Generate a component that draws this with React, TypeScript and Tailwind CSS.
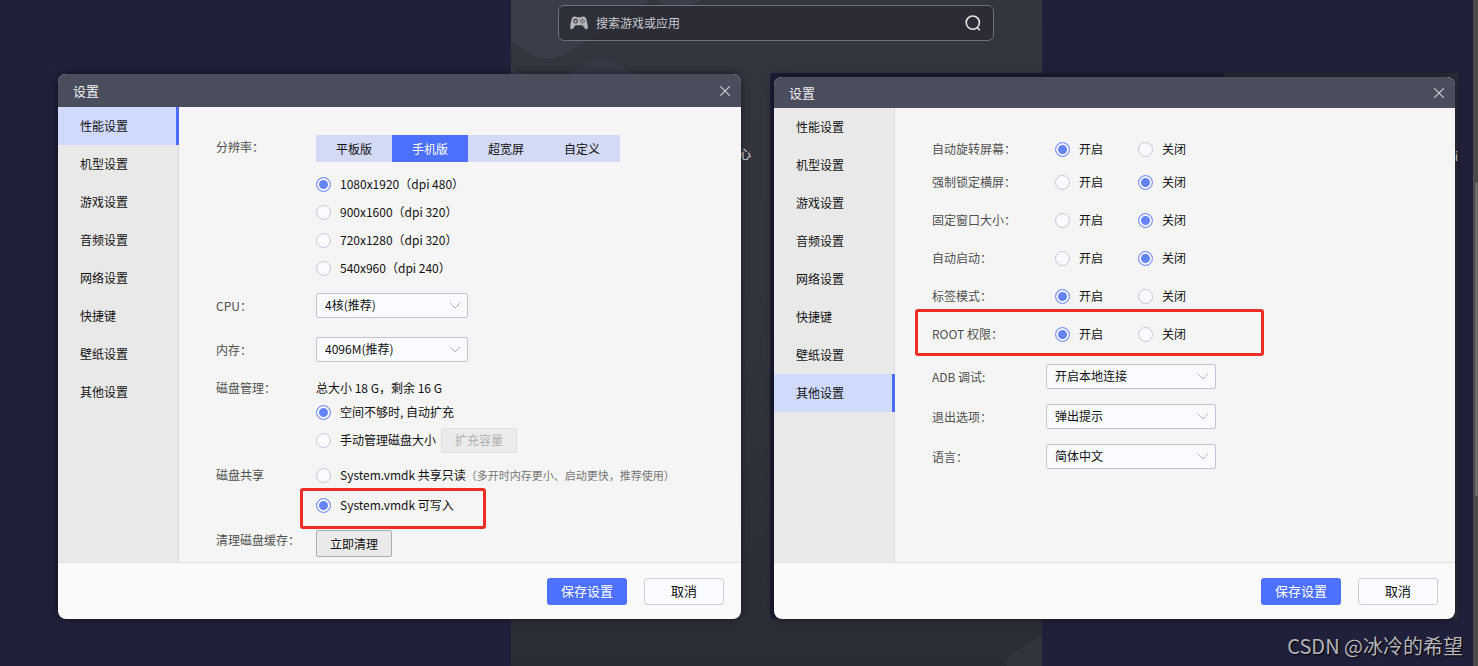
import type { ReactNode } from "react";

const NAV = ["性能设置", "机型设置", "游戏设置", "音频设置", "网络设置", "快捷键", "壁纸设置", "其他设置"];

function GamepadIcon() {
  return (
    <svg viewBox="0 0 18 14" className="h-[14px] w-[18px] shrink-0" aria-hidden="true">
      <path
        d="M3.600.7C4.800.3 6.200.3 6.900 1.200h4.200C11.800.3 13.200.3 14.400.7c1.200.4 1.700 1.500 2.100 3.100.7 2.700 1.300 5.200 1.300 7.600 0 2-1.600 2.500-2.600 1.300L12.400 9.300H5.600L2.800 12.700C1.800 13.900.2 13.400.2 11.400c0-2.400.6-4.900 1.300-7.600C1.900 2.200 2.400 1.100 3.600.7z"
        fill="#b4b5b9"
      />
      <circle cx="5.600" cy="5.200" r="1.800" fill="none" stroke="#3a3c44" strokeWidth="1.100" />
      <g fill="#3a3c44">
        <circle cx="12.400" cy="3.400" r=".8" />
        <circle cx="12.400" cy="6.800" r=".8" />
        <circle cx="10.700" cy="5.100" r=".8" />
        <circle cx="14.100" cy="5.100" r=".8" />
      </g>
    </svg>
  );
}

function SearchIcon() {
  return (
    <svg viewBox="0 0 16 16" className="size-4" fill="none" stroke="#e4e5e8" strokeWidth="1.600" aria-hidden="true">
      <circle cx="7.800" cy="7.600" r="6.600" />
      <path d="M12.600 13l1.800 1.800" strokeLinecap="round" />
    </svg>
  );
}

function Backdrop() {
  return (
    <div className="col-start-1 row-start-1 grid grid-cols-[511fr_531fr_431fr_5px] bg-[#20203a]" aria-hidden="true">
      <div />
      <div className="overflow-hidden bg-linear-to-b from-[#33353f] via-[#31343d] to-[#2b2d36]">
        <svg viewBox="0 0 531 666" preserveAspectRatio="xMinYMin slice" className="h-full w-full">
          <path d="M0 0h140L56 53q-20 11-38 0L0 42z" fill="#3b3e49" />
          <path d="M145 0h46l-14 6q-9 4-18 0z" fill="#3b3e49" />
          <path d="M0 67l22 14H0z" fill="#393b47" />
          <path d="M50 78l32-18q8-4 16 0l34 18z" fill="#373a45" />
          <path d="M531 635l-27 16q-9 6-9 15h36z" fill="#31343d" />
        </svg>
      </div>
      <div />
      <div className="bg-[#4a4a49] pt-[182px]">
        <div className="ml-[2px] h-[314px] rounded-t-sm bg-[#6a6a69]" />
      </div>
    </div>
  );
}

function SearchBar() {
  return (
    <div className="grid grid-cols-[511fr_531fr_431fr_5px]">
      <form
        role="search"
        className="col-start-2 mr-12 ml-[47px] flex h-9 items-center gap-2 rounded-md border border-[#70727a] bg-[#282a33]/70 pr-3 pl-[11px]"
      >
        <GamepadIcon />
        <input
          type="text"
          aria-label="搜索游戏或应用"
          placeholder="搜索游戏或应用"
          className="min-w-0 flex-1 bg-transparent text-xs text-[#c9cacf] outline-none placeholder:text-[#c9cacf]"
        />
        <button type="button" aria-label="搜索">
          <SearchIcon />
        </button>
      </form>
    </div>
  );
}

function Radio({ name, label, checked, children }: { name: string; label: string; checked?: boolean; children?: ReactNode }) {
  return (
    <label className="flex items-center gap-[9px] whitespace-nowrap">
      <input
        type="radio"
        name={name}
        defaultChecked={checked}
        className="size-[15px] shrink-0 appearance-none rounded-full border border-[#c4c6d6] bg-[#fafbff] checked:border-[#7f95f5] checked:bg-[#6483ff] checked:shadow-[inset_0_0_0_2px_#fafbff]"
      />
      <span>
        {label}
        {children}
      </span>
    </label>
  );
}

function Select({ id, value, className }: { id: string; value: string; className: string }) {
  return (
    <div className={`relative ${className}`}>
      <select
        id={id}
        className="h-[25px] w-full appearance-none rounded-[2px] border border-[#c1c4d5] bg-[#fafbff] pr-6 pb-px pl-2 text-xs text-[#111]"
      >
        <option>{value}</option>
      </select>
      <svg
        viewBox="0 0 12 7"
        className="pointer-events-none absolute top-[9px] right-[7px] h-[7px] w-3"
        fill="none"
        stroke="#b9bac2"
        aria-hidden="true"
      >
        <path d="M.7.700l5.300 5.300L11.300.700" />
      </svg>
    </div>
  );
}

function Highlight({ className }: { className: string }) {
  return <span className={`pointer-events-none absolute rounded-[3px] border-3 border-[#ee2d24] ${className}`} aria-hidden="true" />;
}

function Dialog({ active, headerClass, children }: { active: number; headerClass: string; children: ReactNode }) {
  return (
    <section className="relative flex flex-1 flex-col overflow-hidden rounded-lg bg-[#fafafa] shadow-[0_0_8px_rgba(0,0,0,0.5)]">
      <header className={`flex items-center justify-between bg-[#4a4d5b] pr-[11px] pl-[15px] ${headerClass}`}>
        <h2 className="text-[13px] leading-5 text-[#f0f0f4]">设置</h2>
        <button type="button" aria-label="关闭">
          <svg viewBox="0 0 10 10" className="size-[10px]" stroke="#d3d4da" strokeWidth="1.100" aria-hidden="true">
            <path d="M.3.300l9.400 9.400M9.700.300L.3 9.700" />
          </svg>
        </button>
      </header>
      <div className="flex flex-1">
        <nav className="w-[121px] shrink-0 border-r border-[#dcdcdc] bg-[#e9e9e9]">
          {NAV.map((item, i) => (
            <a
              key={item}
              href="#"
              aria-current={i === active ? "page" : undefined}
              className={
                i === active
                  ? "-mr-px flex h-[38px] items-center border-r-3 border-[#4a6cf7] bg-[#d0daff] pl-[22px] text-[#111]"
                  : "flex h-[38px] items-center pl-[22px] text-[#111]"
              }
            >
              {item}
            </a>
          ))}
        </nav>
        <div className="min-w-0 flex-1 bg-[#f5f5f5] pl-[37px]">{children}</div>
      </div>
      <footer className="flex h-[57px] items-center justify-end gap-[17px] border-t border-[#e2e2e2] pr-[17px]">
        <button type="button" className="h-[27px] w-20 rounded-[3px] bg-[#4d70ff] text-[13px] text-white">
          保存设置
        </button>
        <button type="button" className="h-[27px] w-20 rounded-[3px] border border-[#cccedb] bg-[#fafbff] text-[13px] text-[#111]">
          取消
        </button>
      </footer>
    </section>
  );
}

const LABEL = "w-[100px] shrink-0 text-[#505050]";

function PerformanceForm() {
  return (
    <form className="pt-7 pb-[5px]">
      <div className="flex">
        <span className={`${LABEL} leading-6`}>分辨率：</span>
        <div>
          <div className="flex">
            {["平板版", "手机版", "超宽屏", "自定义"].map((t, i) => (
              <button
                key={t}
                type="button"
                className={i === 1 ? "h-[27px] w-[76px] bg-[#4d70ff] text-white" : "h-[27px] w-[76px] bg-[#d3daf6]"}
              >
                {t}
              </button>
            ))}
          </div>
          <div className="mt-2 grid auto-rows-[28px]">
            <Radio name="resolution" label="1080x1920（dpi 480）" checked />
            <Radio name="resolution" label="900x1600（dpi 320）" />
            <Radio name="resolution" label="720x1280（dpi 320）" />
            <Radio name="resolution" label="540x960（dpi 240）" />
          </div>
        </div>
      </div>
      <div className="mt-[11px] flex items-center">
        <label htmlFor="cpu" className={LABEL}>
          CPU：
        </label>
        <Select id="cpu" value="4核(推荐)" className="w-[152px]" />
      </div>
      <div className="mt-[19px] flex items-center">
        <label htmlFor="memory" className={LABEL}>
          内存：
        </label>
        <Select id="memory" value="4096M(推荐)" className="w-[152px]" />
      </div>
      <div className="mt-4 flex">
        <span className={`${LABEL} leading-5`}>磁盘管理：</span>
        <div>
          <p className="leading-5">总大小 18 G，剩余 16 G</p>
          <div className="grid auto-rows-[28px]">
            <Radio name="disk" label="空间不够时, 自动扩充" checked />
            <div className="flex items-center gap-[5px]">
              <Radio name="disk" label="手动管理磁盘大小" />
              <button
                type="button"
                disabled
                className="h-[25px] w-[76px] rounded-[2px] border border-[#dedede] bg-[#ebebeb] text-[#b0b0b0]"
              >
                扩充容量
              </button>
            </div>
          </div>
        </div>
      </div>
      <div className="mt-[6px] flex">
        <span className={`${LABEL} leading-[30px]`}>磁盘共享</span>
        <div className="grid auto-rows-[30px]">
          <Radio name="share" label="System.vmdk 共享只读">
            <span className="text-[11px] text-[#777]">（多开时内存更小、启动更快，推荐使用）</span>
          </Radio>
          <div className="relative flex">
            <Radio name="share" label="System.vmdk 可写入" checked />
            <Highlight className="-top-[2px] -left-4 h-[41px] w-[186px]" />
          </div>
        </div>
      </div>
      <div className="mt-[10px] flex">
        <span className={`${LABEL} leading-5`}>清理磁盘缓存：</span>
        <button type="button" className="h-[27px] w-[76px] rounded-[2px] border border-[#adadad] bg-[#eaeaea]">
          立即清理
        </button>
      </div>
    </form>
  );
}

const TOGGLES = [
  { label: "强制锁定横屏：", on: false },
  { label: "固定窗口大小：", on: false },
  { label: "自动启动：", on: false },
  { label: "标签模式：", on: true },
  { label: "ROOT 权限：", on: true, marked: true },
];

function ToggleRow({ label, on, marked, className }: { label: string; on: boolean; marked?: boolean; className: string }) {
  return (
    <div className={`relative flex items-center ${className}`}>
      <span className="w-[123px] shrink-0 text-[#505050]">{label}</span>
      <div className="flex w-[83px]">
        <Radio name={label} label="开启" checked={on} />
      </div>
      <Radio name={label} label="关闭" checked={!on} />
      {marked && <Highlight className="-top-[6px] -left-[17px] h-[47px] w-[349px]" />}
    </div>
  );
}

function OtherForm() {
  const selects = [
    { id: "adb", label: "ADB 调试:", value: "开启本地连接" },
    { id: "exit", label: "退出选项：", value: "弹出提示" },
    { id: "language", label: "语言：", value: "简体中文" },
  ];
  return (
    <form className="pt-[27px]">
      <ToggleRow label="自动旋转屏幕：" on className="h-[28px]" />
      {TOGGLES.map((t) => (
        <ToggleRow key={t.label} {...t} className="h-[38px]" />
      ))}
      <div className="flex flex-col gap-[15px] pt-[11px]">
        {selects.map((s) => (
          <div key={s.id} className="flex items-center">
            <label htmlFor={s.id} className="w-[114px] shrink-0 text-[#505050]">
              {s.label}
            </label>
            <Select id={s.id} value={s.value} className="w-[170px]" />
          </div>
        ))}
      </div>
    </form>
  );
}

export default function App() {
  return (
    <main className="grid min-h-screen font-['Noto_Sans_CJK_SC',sans-serif] text-xs text-[#111]">
      <Backdrop />
      <div className="relative col-start-1 row-start-1 flex flex-col pt-[5px]">
        <SearchBar />
        <div className="mt-8 grid grid-cols-[683fr_688fr] gap-[29px] pr-5 pl-[58px]">
          <div className="relative flex pt-px">
            <span className="absolute top-[72px] -right-[10px] leading-[18px] text-[#e8e8ea]">心</span>
            <Dialog active={0} headerClass="h-[33px]">
              <PerformanceForm />
            </Dialog>
          </div>
          <div className="relative flex bg-[#1c1c35] bg-linear-to-r from-[#1c1c35] from-66% to-[#2b2d37] to-66% pt-1 pr-[3px] pl-1">
            <span className="absolute top-[74px] right-0 leading-[18px] text-[#e8e8ea]">vi</span>
            <Dialog active={7} headerClass="h-[31px]">
              <OtherForm />
            </Dialog>
          </div>
        </div>
        <p className="mt-auto pr-[15px] pb-[6px] text-right text-[20px] leading-7 text-[#b5b5bb] [text-shadow:1px_1px_1px_#000]">
          CSDN @冰冷的希望
        </p>
      </div>
    </main>
  );
}
